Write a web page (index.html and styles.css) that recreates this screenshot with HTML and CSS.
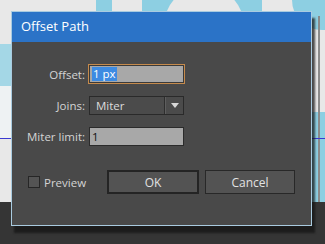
FILE: index.html
```html
<!DOCTYPE html>
<html lang="en">
<head>
    <meta charset="UTF-8">
    <meta name="viewport" content="width=device-width, initial-scale=1.0">
    <title>Offset Path</title>
    <link rel="stylesheet" href="styles.css">
</head>
<body>

    <div class="scene">
        <div class="shape blue-top-a"></div>
        <div class="shape blue-top-b"></div>
        <div class="shape blue-top-c"></div>
        <div class="shape blue-left-a"></div>
        <div class="shape blue-left-b"></div>
        <div class="shape blue-right"></div>
        <div class="shape guide-v"></div>
        <div class="shape guide-h"></div>
        <div class="shape floor"></div>
    </div>

    <div class="dialog">
        <div class="title-bar">Offset Path</div>
        <div class="dialog-body">
            <div class="form">
                <label class="label" for="offset">Offset:</label>
                <div class="field focused">
                    <span class="selected">1 px</span>
                </div>

                <label class="label">Joins:</label>
                <div class="select">
                    <span class="select-text">Miter</span>
                    <span class="select-arrow"></span>
                </div>

                <label class="label" for="miter">Miter limit:</label>
                <div class="field">
                    <span class="value">1</span>
                </div>
            </div>

            <div class="footer">
                <label class="check">
                    <span class="box"></span>
                    Preview
                </label>
                <button class="btn btn-default">OK</button>
                <button class="btn">Cancel</button>
            </div>
        </div>
    </div>

</body>
</html>
```

FILE: styles.css
```css
*{
    margin: 0;
    padding: 0;
    box-sizing: border-box;
}

body{
    width: 325px;
    height: 244px;
    overflow: hidden;
    position: relative;
    background-color: #e8e8e8;
    font-family: "Open Sans", "Noto Sans", sans-serif;
    font-size: 11.5px;
}

/* artboard behind the dialog */
.scene{
    position: absolute;
    inset: 0;
}

.shape{
    position: absolute;
}

.blue-top-a{
    left: 96px;
    top: -20px;
    width: 16px;
    height: 34px;
    background-color: #8dcfe2;
}

.blue-top-b{
    left: 142px;
    top: -20px;
    width: 120px;
    height: 34px;
    background-color: #8dcfe2;
}

.blue-top-b::after{
    content: "";
    position: absolute;
    left: 22px;
    top: 6px;
    width: 80px;
    height: 80px;
    border-radius: 50%;
    background-color: #e8e8e8;
}

.blue-top-c{
    left: 292px;
    top: -10px;
    width: 40px;
    height: 40px;
    border-radius: 0 0 0 30px;
    background-color: #8dcfe2;
}

.blue-left-a{
    left: 0;
    top: 44px;
    width: 14px;
    height: 42px;
    background-color: #a4d7e6;
}

.blue-left-b{
    left: 0;
    top: 86px;
    width: 14px;
    height: 52px;
    background-color: #eef2f3;
}

.blue-right{
    left: 310px;
    top: 112px;
    width: 15px;
    height: 92px;
    background-color: #8dcfe2;
}

.guide-v{
    left: 318px;
    top: 16px;
    width: 2px;
    height: 186px;
    background-color: #8a8a8a;
}

.guide-h{
    left: 0;
    top: 138px;
    width: 325px;
    height: 1px;
    background-color: #3a3ad0;
}

.floor{
    left: 0;
    top: 202px;
    width: 325px;
    height: 42px;
    background-color: #353535;
}

/* dialog window */
.dialog{
    position: absolute;
    left: 11px;
    top: 11px;
    width: 301px;
    height: 215px;
    border: 1px solid #a9cbe0;
    background-color: #494949;
    box-shadow: 3px 7px 2px rgba(20, 20, 20, 0.75);
}

.title-bar{
    height: 30px;
    line-height: 29px;
    padding-left: 9px;
    background-color: #2b73c7;
    color: #ffffff;
    font-size: 13px;
}

.dialog-body{
    padding-top: 22px;
}

.form{
    display: grid;
    grid-template-columns: 73px 97px;
    grid-auto-rows: 20px;
    row-gap: 11px;
    column-gap: 3px;
    align-items: center;
}

.label{
    text-align: right;
    color: #d4d4d4;
}

.field{
    width: 95px;
    height: 19px;
    margin-left: 1px;
    border: 1px solid #2b2b2b;
    background-color: #a8a8a8;
    display: flex;
    align-items: center;
    padding-left: 2px;
}

.field.focused{
    width: 97px;
    height: 20px;
    margin-left: 0;
    border: 1px solid #c58a4c;
    box-shadow: inset 0 0 0 1px #3a3a3a;
    padding-left: 3px;
}

.selected{
    background-color: #3d8be2;
    color: #ffffff;
    line-height: 14px;
    padding: 0 1px;
}

.value{
    color: #111111;
}

.select{
    width: 95px;
    height: 19px;
    margin-left: 1px;
    border: 1px solid #2a2a2a;
    background-color: #4b4b4b;
    display: flex;
    align-items: center;
    position: relative;
    padding-left: 6px;
    color: #dcdcdc;
}

.select-text{
    flex: 1;
}

.select-arrow{
    width: 19px;
    height: 17px;
    border-left: 1px solid #2e2e2e;
    box-shadow: inset 1px 0 0 #5e5e5e;
    position: relative;
}

.select-arrow::after{
    content: "";
    position: absolute;
    left: 6px;
    top: 6px;
    border-left: 4px solid transparent;
    border-right: 4px solid transparent;
    border-top: 5px solid #d8d8d8;
}

.footer{
    display: flex;
    align-items: center;
    margin-top: 24px;
    padding-left: 16px;
}

.check{
    display: flex;
    align-items: center;
    gap: 4px;
    color: #d4d4d4;
    width: 79px;
}

.box{
    width: 12px;
    height: 12px;
    border: 1px solid #262626;
    background-color: #545454;
}

.btn{
    width: 90px;
    height: 24px;
    margin-right: 6px;
    border: 1px solid #282828;
    background-color: #535353;
    color: #e2e2e2;
    font-family: "Open Sans", "Noto Sans", sans-serif;
    font-size: 12px;
}

.btn-default{
    width: 92px;
    border: 2px solid #242424;
}
```
